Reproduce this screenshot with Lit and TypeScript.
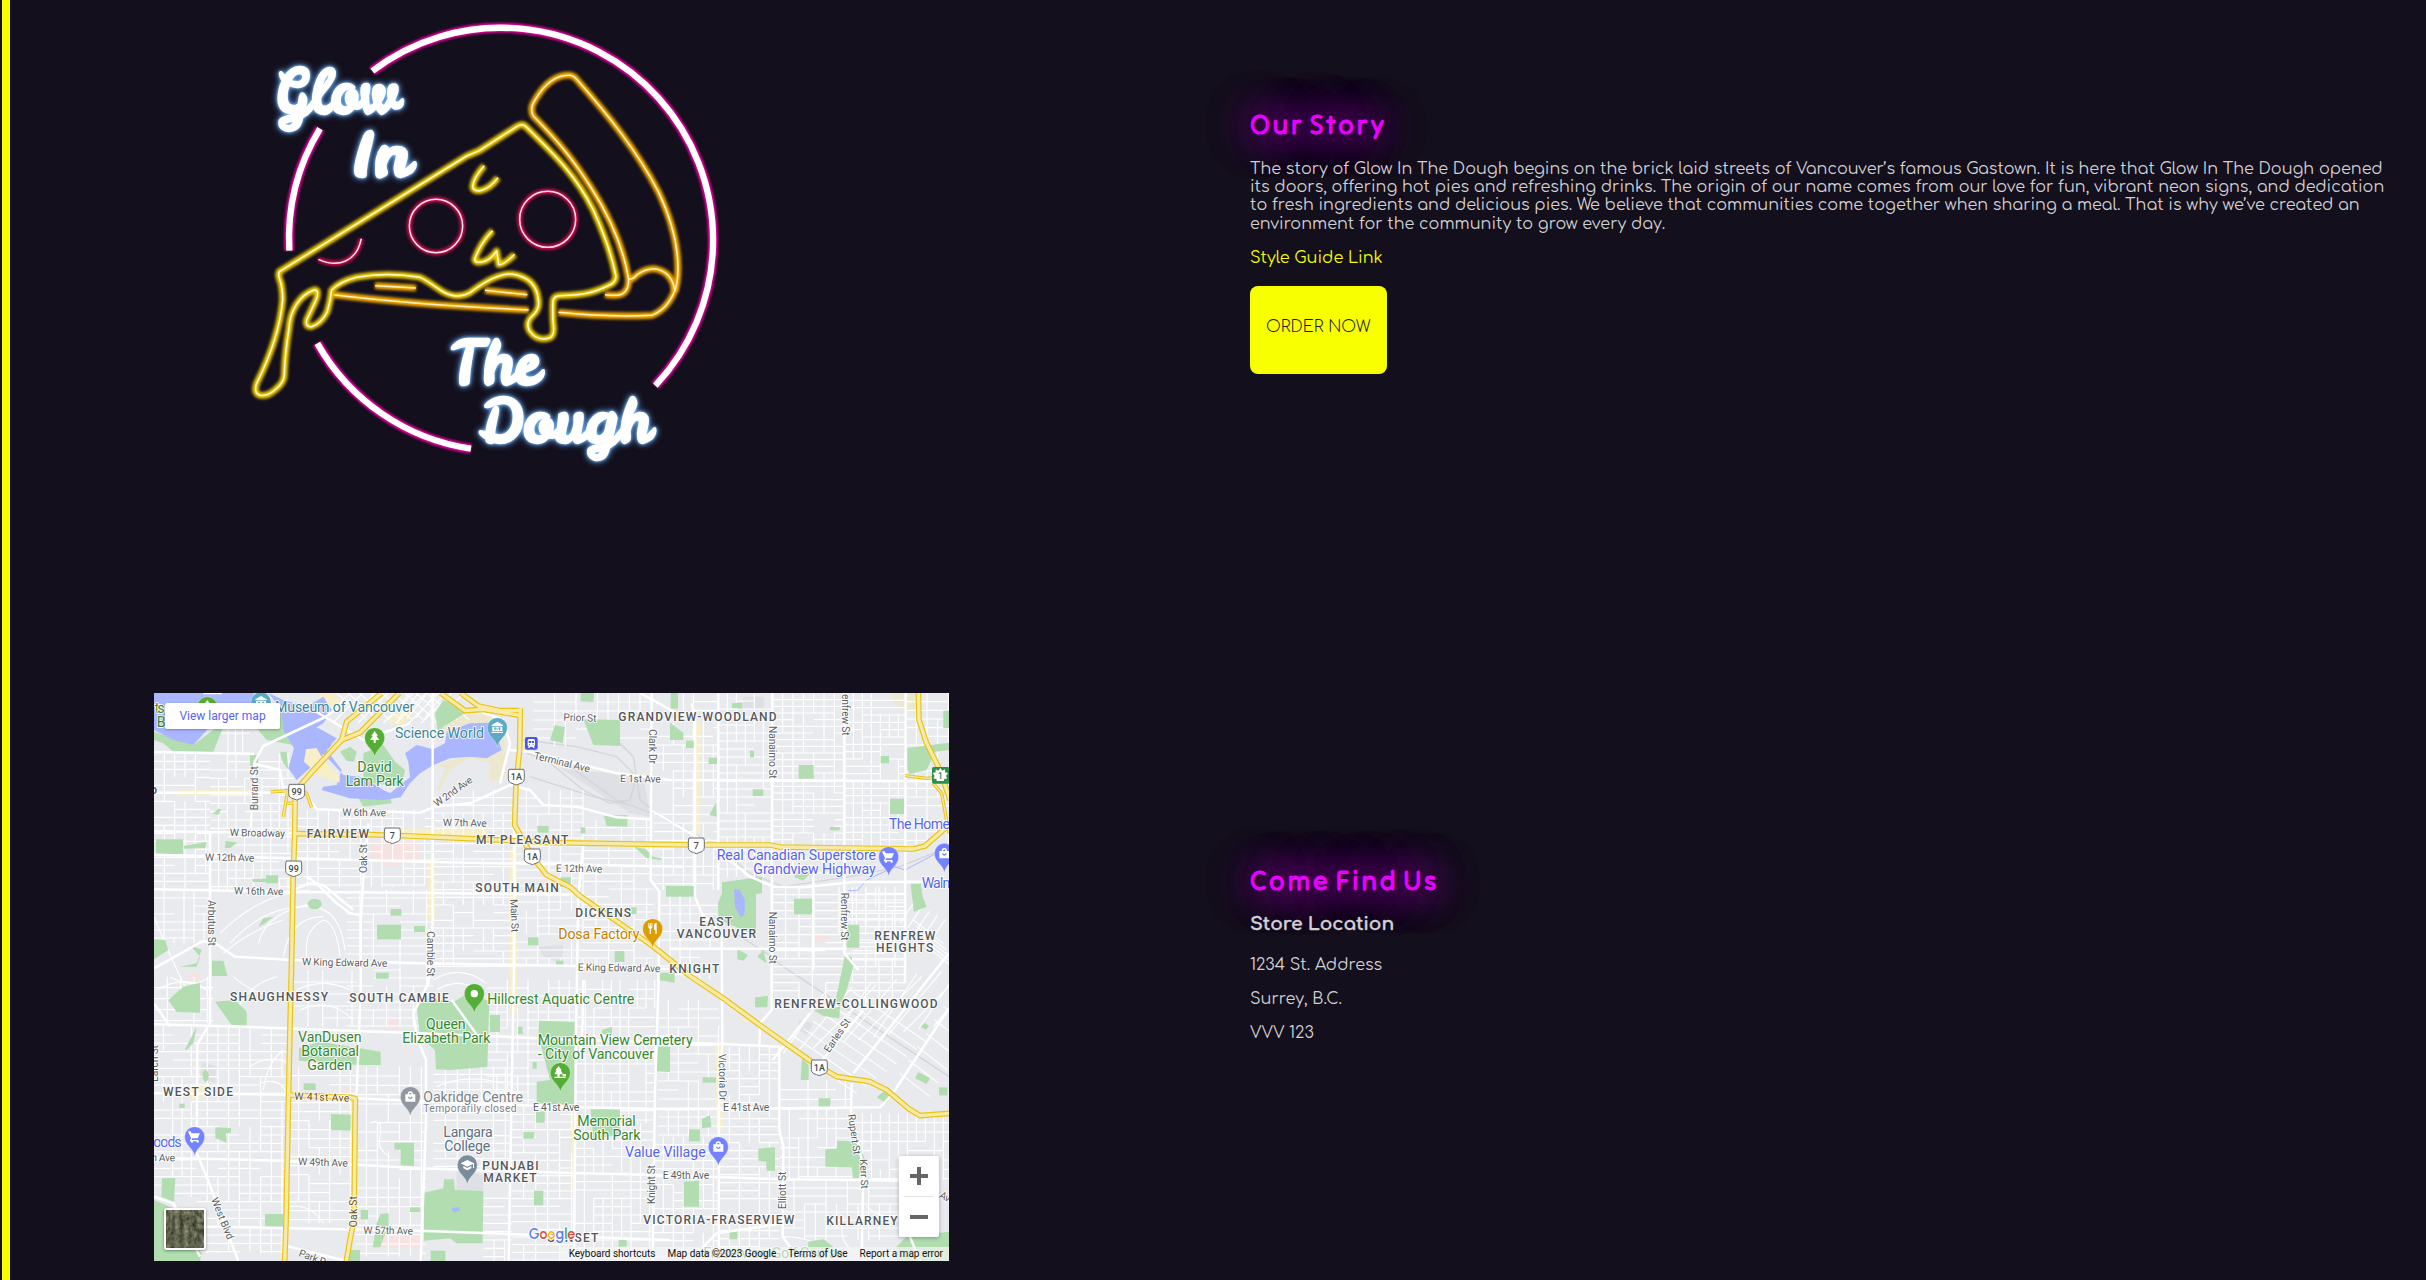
import { LitElement, html, svg, css } from "lit";
import { customElement } from "lit/decorators.js";

/* ---------- map data: three units per pixel ---------- */

type Label = [string, number, number, number, string, number?];

const LABELS: Label[] = [
  ["ts", 14, 68, 30, "poi green"],
  ["B", 20, 110, 22, "poi green"],
  ["Museum of Vancouver", 375, 66, 418, "poi teal"],
  ["Science World", 735, 143, 267, "poi teal"],
  ["David", 622, 246, 103, "poi green"],
  ["Lam Park", 587, 288, 174, "poi green"],
  ["W 6th Ave", 577, 377, 131, "road", 1],
  ["W Broadway", 239, 438, 166, "road", 1],
  ["W 12th Ave", 165, 512, 148, "road", 1],
  ["W 16th Ave", 252, 613, 148, "road", 1],
  ["W King Edward Ave", 456, 826, 256, "road", 1],
  ["FAIRVIEW", 470, 444, 187, "area"],
  ["o", 1, 312, 18, "area"],
  ["Burrard St", 325, 361, 133, "road", -90],
  ["Oak St", 652, 549, 87, "road", -90],
  ["Arbutus St", 174, 630, 138, "road", 90],
  ["Prior St", 1240, 92, 99, "road", 2],
  ["GRANDVIEW-WOODLAND", 1405, 94, 475, "area"],
  ["Clark Dr", 1497, 118, 104, "road", 90],
  ["Terminal Ave", 1150, 206, 172, "road", 14],
  ["E 1st Ave", 1410, 276, 122, "road", 1],
  ["W 2nd Ave", 860, 352, 134, "road", -35],
  ["W 7th Ave", 878, 408, 132, "road", 1],
  ["MT PLEASANT", 978, 463, 277, "area"],
  ["E 12th Ave", 1217, 545, 140, "road", 1],
  ["SOUTH MAIN", 976, 607, 250, "area"],
  ["DICKENS", 1276, 682, 167, "area"],
  ["Dosa Factory", 1225, 747, 243, "poi orange"],
  ["E King Edward Ave", 1283, 842, 248, "road", 1],
  ["Main St", 1081, 628, 99, "road", 88],
  ["Cambie St", 831, 724, 136, "road", 90],
  ["Nanaimo St", 1858, 108, 158, "road", 90],
  ["Nanaimo St", 1858, 665, 157, "road", 90],
  ["enfrew St", 2077, 12, 125, "road", 90],
  ["Renfrew St", 2073, 608, 144, "road", 90],
  ["The Home", 2217, 417, 183, "poi blue"],
  ["Real Canadian Superstore", 1700, 510, 478, "poi blue"],
  ["Grandview Highway", 1810, 552, 367, "poi blue"],
  ["Waln", 2315, 593, 86, "poi blue"],
  ["EAST", 1648, 708, 98, "area"],
  ["VANCOUVER", 1580, 745, 238, "area"],
  ["RENFREW", 2173, 750, 183, "area"],
  ["HEIGHTS", 2178, 786, 172, "area"],
  ["KNIGHT", 1558, 849, 150, "area"],
  ["SHAUGHNESSY", 240, 934, 294, "area"],
  ["SOUTH CAMBIE", 598, 937, 298, "area"],
  ["VanDusen", 444, 1056, 191, "poi green"],
  ["Botanical", 454, 1098, 173, "poi green"],
  ["Garden", 472, 1140, 134, "poi green"],
  ["WEST SIDE", 39, 1218, 210, "area"],
  ["W 41st Ave", 433, 1229, 165, "road brown", 2],
  ["oods", 10, 1370, 85, "poi blue"],
  ["n Ave", 4, 1413, 71, "road", 1],
  ["W 49th Ave", 444, 1425, 149, "road", 2],
  ["West Blvd", 183, 1528, 132, "road", 68],
  ["W 57th Ave", 640, 1631, 149, "road", 1],
  ["Oak St", 620, 1612, 94, "road brown", -90],
  ["Park R", 444, 1698, 84, "road", 20],
  ["Larch St", 25, 1175, 110, "road", -90],
  ["Hillcrest Aquatic Centre", 1012, 941, 441, "poi green"],
  ["Queen", 828, 1017, 119, "poi green"],
  ["Elizabeth Park", 757, 1059, 264, "poi green"],
  ["Mountain View Cemetery", 1163, 1065, 465, "poi green"],
  ["- City of Vancouver", 1163, 1107, 349, "poi green"],
  ["Oakridge Centre", 820, 1236, 299, "poi gray"],
  ["Temporarily closed", 820, 1266, 280, "road gray"],
  ["E 41st Ave", 1149, 1262, 139, "road"],
  ["Memorial", 1282, 1308, 175, "poi green"],
  ["South Park", 1270, 1350, 201, "poi green"],
  ["Langara", 880, 1341, 148, "poi slate"],
  ["College", 883, 1383, 138, "poi slate"],
  ["PUNJABI", 997, 1440, 169, "area"],
  ["MARKET", 1000, 1476, 160, "area"],
  ["Value Village", 1425, 1401, 242, "poi blue"],
  ["Knight St", 1515, 1542, 117, "road", -90],
  ["E 49th Ave", 1538, 1468, 140, "road"],
  ["VICTORIA-FRASERVIEW", 1480, 1602, 453, "area"],
  ["SUNSET", 1192, 1656, 153, "area"],
  ["RENFREW-COLLINGWOOD", 1873, 954, 490, "area"],
  ["Earles St", 2038, 1090, 115, "road", -56],
  ["Victoria Dr", 1706, 1092, 140, "road", 89],
  ["E 41st Ave", 1719, 1263, 139, "road"],
  ["Rupert St", 2094, 1274, 122, "road", 82],
  ["Kerr St", 2130, 1408, 89, "road", 88],
  ["Elliott St", 1909, 1557, 112, "road", -90],
  ["KILLARNEY", 2029, 1606, 214, "area"],
  ["Av", 2366, 1522, 32, "road", 28],
  ["Fraserview Golf Course", 1660, 1704, 420, "poi green"],
];

const WATER = [
  "12,9 312,9 300,60 190,70 180,110 130,165 70,150 12,120",
  "355,9 400,30 470,50 520,20 545,60 520,100 500,112 515,140 545,165 500,215 440,270 415,235 432,175 400,120 395,60",
  "500,112 560,145 520,190 580,255 640,262 700,300 720,310 780,262 775,215 765,190 800,165 850,178 885,160 890,125 960,100 1020,98 1045,150 1055,180 1010,205 960,200 900,205 850,225 810,250 780,280 752,322 700,330 600,325 515,300 520,290 560,285 575,240 530,180",
  "1752,598 1768,598 1785,630 1783,675 1772,682 1755,650",
  "905,1555 925,1550 930,1560 912,1568",
];

const PARKS = [
  "12,125 130,165 190,120 190,70 220,9 240,60 190,185 70,185 40,160 12,150",
  "300,90 350,150 430,165 440,120 400,60 300,60",
  "570,185 600,170 620,185 612,215 590,212", "640,190 700,165 735,215 765,240 755,290 640,275",
  "620,315 720,308 725,340 640,350", "390,185 410,185 415,240 398,215", "300,195 325,195 325,228 300,228",
  "18,448 99,448 99,492 18,492", "102,468 170,455 166,474 102,476", "227,453 262,458 240,474 225,474",
  "348,556 384,556 384,580 348,580", "308,566 348,566 348,576 308,576", "722,657 754,657 754,677 722,677",
  "681,704 753,704 753,748 681,748", "12,748 45,750 55,780 12,808", "90,830 140,820 155,780 120,765 150,800 140,830",
  "325,710 340,685 370,680 345,700", "186,812 220,812 232,858 186,858", "678,848 716,848 716,866 678,866",
  "187,372 205,356 214,358 205,374",
  "855,70 880,30 930,50 945,70 880,110 865,130", "1200,150 1215,105 1245,112 1238,160",
  "1300,88 1410,90 1410,168 1330,165", "1292,9 1332,9 1330,36 1292,34", "1562,9 1584,9 1584,56 1562,56",
  "1560,98 1600,128 1600,150 1560,150", "1362,378 1432,375 1432,410 1370,408", "1162,408 1196,408 1196,428 1162,428",
  "1292,412 1306,412 1306,430 1292,430", "1452,470 1488,478 1510,500 1534,504 1534,510 1490,505", "1548,588 1632,588 1632,620 1548,620",
  "1232,562 1264,562 1260,592 1230,590", "1134,742 1165,742 1165,766 1134,766", "792,708 825,708 825,726 792,726",
  "1442,652 1460,652 1460,672 1442,672", "1394,783 1423,783 1423,816 1394,816", "1218,812 1240,812 1240,826 1218,826",
  "1746,40 1777,38 1777,56 1746,54", "1608,152 1638,152 1638,174 1608,174", "1676,203 1704,203 1704,222 1676,222",
  "1800,182 1812,182 1812,202 1800,202", "1946,225 1991,225 1991,266 1946,266", "2192,198 2217,198 2217,220 2192,220",
  "2272,174 2397,158 2397,180 2355,185 2330,240 2280,252 2272,240", "2380,62 2397,62 2397,114 2380,114",
  "1808,298 1840,298 1840,318 1808,318", "1678,375 1698,338 1700,380", "2220,326 2264,326 2264,372 2220,372",
  "2040,411 2069,411 2069,421 2040,421", "1716,577 1836,560 1836,610 1818,612 1818,735 1760,712 1706,690 1704,640 1716,610", "1932,626 1990,626 1990,673 1932,673",
  "1932,560 1960,530 1985,545 1960,572", "2282,582 2312,582 2318,620 2330,650 2292,665 2286,620", "2090,704 2128,704 2128,773 2090,773",
  "2085,795 2105,800 2110,830 2090,900 2070,950 2055,940", "1762,778 1794,795 1780,812 1762,808", "1822,800 1840,780 1850,820",
  "1528,848 1574,848 1574,878 1528,870",
  "55,930 100,890 150,878 150,968 80,966", "195,935 255,930 290,965 290,1005 245,1005", "105,1078 140,1010 130,1060 110,1080",
  "447,1075 510,1055 692,1085 692,1125 624,1125 447,1112", "461,1180 497,1180 497,1200 461,1200", "543,1272 602,1274 602,1322 543,1320",
  "196,1312 243,1314 243,1328 228,1330 230,1358 196,1344", "88,1241 104,1241 104,1254 88,1254", "36,1465 76,1464 72,1535 34,1520",
  "12,1530 70,1555 110,1640 155,1690 150,1713 12,1713", "345,1572 400,1572 400,1610 345,1610", "733,1358 791,1358 791,1428 752,1426 752,1380 733,1378",
  "632,1560 654,1560 654,1588 632,1588", "692,1572 716,1570 716,1605 690,1672 668,1672 680,1600", "595,1680 630,1680 630,1713 595,1713", "780,1552 810,1552 810,1566 780,1566",
  "800,950 830,925 912,935 960,905 1018,935 1012,1130 900,1140 858,1138 855,1080 810,1040", "1020,975 1050,975 1050,1026 1020,1026",
  "1104,1010 1118,1010 1118,1032 1104,1032", "1166,992 1274,996 1274,1245 1160,1240 1160,1175 1200,1170 1166,1040", "1356,1020 1386,1010 1386,1035 1356,1032",
  "1524,1070 1560,1070 1560,1146 1516,1144", "1148,1116 1160,1116 1160,1136 1148,1136", "1322,1258 1410,1258 1410,1332 1330,1350",
  "1158,1265 1184,1265 1184,1298 1158,1298", "1120,1326 1152,1326 1152,1346 1120,1346", "1152,1502 1180,1502 1180,1546 1152,1546",
  "822,1508 880,1495 882,1468 912,1468 914,1500 1000,1502 998,1660 920,1660 900,1645 822,1652", "842,1682 886,1682 886,1713 842,1713", "1406,1650 1430,1650 1430,1670 1406,1670",
  "780,1358 792,1360 792,1426 780,1426",
  "1815,922 1854,918 1852,952 1815,952", "1990,960 2070,950 2068,985 2020,978", "1956,1105 1976,1125 1976,1170 1952,1170",
  "2006,1225 2042,1225 2040,1250 2006,1250", "2180,1222 2200,1205 2225,1220 2208,1240", "2295,1165 2305,1147 2340,1165 2330,1182",
  "2312,1010 2325,998 2337,1008 2327,1020", "2367,1192 2392,1192 2392,1216 2367,1216", "1658,1162 1698,1162 1698,1178 1658,1178",
  "1656,1286 1680,1276 1684,1312 1656,1314", "1617,1318 1650,1318 1650,1354 1617,1354", "1825,1376 1875,1372 1875,1442 1850,1442 1848,1415 1825,1412",
  "2026,1378 2060,1376 2062,1352 2124,1355 2145,1410 2125,1465 2110,1464 2105,1432 2026,1430", "1601,1475 1647,1472 1647,1550 1601,1550",
  "1738,1624 1762,1624 1762,1648 1738,1648", "1975,1655 2020,1648 2050,1670 2005,1690 1975,1675", "2240,1670 2270,1640 2397,1625 2397,1713 2240,1713",
];

const TINT = [
  "82,300 300,300 300,318 82,318", "465,180 500,175 520,210 568,258 568,278 500,255 465,215",
  "715,90 760,50 790,70 750,115", "500,10 560,10 580,60 550,60", "1628,90 1652,100 1650,430 1630,430",
  "1262,1260 1280,1260 1275,1500 1262,1500", "1078,480 1100,480 1102,970 1080,970", "835,500 855,500 855,690 835,690", "700,415 1010,420 1010,445 700,440",
  "117,1190 180,1182 180,1220 117,1230", "1695,1060 1720,1060 1720,1320 1700,1320", "1770,990 1795,980 1800,1000",
];
const SAND = ["865,130 900,80 960,72 1060,80 1068,250 1055,272 1020,272 1020,220 960,205 900,240 870,300 860,300 885,235 850,225 960,195 1040,170 960,110", "2225,9 2295,9 2295,70 2230,40"];
const PINK = [
  "662,455 802,452 810,512 720,530 662,505", "118,850 150,845 145,875 120,870", "1170,540 1200,545 1195,590 1172,580", "1992,730 2030,730 2030,752 1992,752",
  "582,1190 612,1190 612,1212 582,1212", "692,1640 810,1635 810,1672 692,1675", "708,988 745,990 745,1020 728,1020",
];
const SHADE = ["155,1115 200,1130 195,1180 150,1165", "1165,770 1240,765 1235,820 1180,800", "920,1440 1000,1455 1000,1500 920,1500", "1945,990 1990,1000 1970,1035 1945,1020", "1230,235 1480,260 1500,380 1440,370", "1780,20 1842,20 1842,56 1780,56"];

const ARTERIAL = [
  "12,186 312,192", "302,415 314,215 340,168 520,84 600,30", "12,308 415,308", "12,424 432,430", "12,494 810,515 1600,530", "12,598 432,606 810,608 1260,615",
  "12,835 155,755 185,752 255,800 430,810 810,820 1290,828 1560,838", "12,1003 300,1011 810,1030 1290,1050 1720,1062 1890,1070", "12,1210 420,1214", "616,1225 810,1234 1290,1252 1560,1258 2190,1252 2225,1215 2397,955",
  "12,1403 400,1412 810,1435 1290,1450 1560,1456 1900,1468 2300,1472", "170,1610 810,1622 1290,1640 1560,1650", "180,424 180,1000 142,1062 140,1390 170,1460 265,1713",
  "655,400 640,560 632,700 632,900 620,1210", "848,9 848,700 835,880 790,970 800,1040 828,1110 828,1300 812,1713", "1095,400 1092,840 1085,1200 1076,1713", "1300,465 1285,620 1278,1040 1272,1713",
  "1505,9 1502,570 1528,605 1525,900 1515,1200 1508,1713", "1625,40 1635,80 1635,620 1655,670 1715,730 1717,1060 1707,1250 1706,1713", "1705,9 1705,600", "1867,9 1865,960 1830,1000 1828,1065",
  "2083,9 2083,790 2125,840", "2267,9 2265,880", "1080,180 1140,185 1400,250 1560,270 2397,274", "1502,360 1690,470 1800,560 1870,590 1960,592 2110,576 2397,575",
  "848,350 960,340 1080,285 1140,300 1180,345 1280,350 1400,382 1502,388", "1888,1070 1888,1320 1900,1370 1898,1640 1950,1713", "1560,776 2090,776", "1990,560 1990,840",
  "1300,870 1298,1000 1290,1100", "2105,1180 2103,1270 2140,1430 2135,1713", "1868,1110 1980,970", "2010,1120 2140,960", "2110,1150 2397,790", "1690,1065 1610,1062", "470,560 500,580 560,640 600,670 632,676",
  "432,600 475,580 520,585 610,660", "160,9 215,9", "490,60 640,150 780,100", "310,220 390,240 400,300", "1470,9 1580,70", "12,1520 70,1540 150,1700", "410,1668 590,1713", "1640,1690 1700,1630 1900,1600", "905,930 985,1040", "980,60 1060,90 1080,160 1060,240 1050,280", "480,330 500,358 810,368 850,352",
  "12,940 60,1010", "2280,1640 2310,1713",
];

const CURVES = [
  "M210,730 Q330,610 480,600", "M240,760 Q350,640 490,650 Q570,660 585,780", "M325,760 Q350,660 500,640", "M400,800 Q420,680 520,680", "M470,800 Q460,720 520,690 Q560,700 570,800", "M220,790 Q300,720 400,690",
  "M12,680 Q60,800 110,900", "M60,860 Q130,900 180,860", "M20,900 Q110,850 170,900", "M250,860 Q330,930 420,920", "M260,960 Q300,880 380,860", "M440,900 Q520,860 600,900", "M450,960 Q540,920 610,990", "M330,1180 Q390,1160 410,1210", "M300,1130 Q360,1090 410,1120", "M340,1200 Q350,1120 400,1080",
  "M860,900 Q920,860 990,900", "M850,870 Q930,820 1010,880", "M660,1300 Q700,1280 690,1340 Q680,1380 720,1400", "M860,1190 Q940,1150 1060,1180", "M420,1550 Q480,1540 520,1600", "M2150,1550 Q2200,1600 2280,1560", "M1900,1640 Q2000,1640 2080,1713", "M2080,1580 Q2060,1660 2120,1690",
];

const RAIL = ["1120,150 1280,170 1400,200 1460,260 1440,330 1380,340 1300,300 1140,170", "1130,190 1260,230 1400,330 1560,390 1700,470 1800,550 1900,590 2100,560 2250,530 2397,470", "1400,150 1450,200 1470,330 1560,400", "1740,720 1850,790 1900,830 2397,1160", "1140,260 1330,320 1440,345"];

const HWY = [
  "448,290 480,252 575,150 590,95 695,9", "575,150 630,128 748,9", "872,9 945,62 1000,58 1110,76", "932,9 985,48 1050,62 1110,62",
  "1111,55 1109,180 1098,280 1094,405 1150,505 1190,555 1262,592 1290,618 1508,768 1620,858 1720,925 1840,1013 1980,1112 2060,1160 2160,1175 2210,1200 2275,1255 2310,1277 2400,1270",
  "436,300 434,440 430,540 424,850 420,1010 415,1250 408,1600 404,1720", "434,431 660,434 780,438 1010,448 1200,458 1640,465 1860,465 1890,471 2290,477 2325,468 2397,405",
  "2305,9 2307,90 2330,160 2370,240 2400,330", "418,1215 600,1222 616,1226 612,1590 600,1650 588,1720",
];
const HWY_THIN = ["362,306 440,300", "412,310 400,380", "412,340 440,338", "440,300 470,310 485,352", "2265,257 2330,265 2380,260", "2350,280 2375,310 2397,430"];

/* deterministic noise, so that streets break off in the same places on every render */
const noise = (a: number, b: number) => {
  const v = Math.sin(a * 12.9898 + b * 78.233) * 43758.5453;
  return v - Math.floor(v);
};

/* [x0, y0, x1, y1, column pitch, row pitch] */
const BLOCKS = [
  [12, 190, 180, 600, 31, 24], [180, 190, 430, 600, 26, 25], [440, 360, 850, 590, 32, 25], [12, 600, 180, 760, 30, 24], [190, 9, 300, 190, 22, 60],
  [590, 600, 850, 1010, 40, 24], [850, 300, 1095, 830, 30, 23], [1095, 300, 1300, 830, 34, 24], [1300, 390, 1510, 840, 38, 23], [1150, 9, 1500, 170, 32, 27],
  [1510, 9, 1705, 600, 30, 26], [1705, 9, 1867, 560, 27, 24], [1867, 9, 2083, 560, 31, 20], [2083, 9, 2267, 470, 27, 22], [2267, 9, 2397, 470, 32, 26],
  [1867, 590, 2265, 960, 40, 24], [1530, 620, 1705, 870, 30, 26], [2090, 590, 2265, 830, 29, 20], [12, 1010, 140, 1520, 28, 25], [140, 1010, 415, 1690, 32, 25],
  [415, 1130, 616, 1600, 31, 27], [616, 1130, 828, 1700, 33, 28], [850, 1130, 1085, 1440, 36, 23], [1010, 870, 1280, 1250, 31, 24], [1085, 1250, 1275, 1713, 36, 23],
  [1280, 870, 1515, 1300, 26, 28], [1275, 1300, 1510, 1713, 28, 25], [1525, 930, 1710, 1340, 30, 27], [1510, 1340, 1705, 1713, 30, 24], [1708, 1070, 1888, 1713, 30, 24],
  [1890, 1170, 2105, 1470, 28, 29], [1900, 1470, 2250, 1650, 32, 24], [2110, 1270, 2397, 1470, 27, 28], [1000, 1500, 1085, 1713, 32, 25], [12, 860, 190, 1000, 40, 33], [430, 840, 620, 1010, 44, 36],
];

function grid([x0, y0, x1, y1, dx, dy]: number[]) {
  let d = "";
  for (let x = x0 + dx; x < x1; x += dx)
    for (let y = y0; y < y1; y += dy * 3) if (noise(x, y) > 0.3) d += `M${x} ${y}V${Math.min(y1, y + dy * 3)}`;
  for (let y = y0 + dy; y < y1; y += dy)
    for (let x = x0; x < x1; x += dx * 2) if (noise(y, x + 7) > 0.18) d += `M${x} ${y}H${Math.min(x1, x + dx * 2)}`;
  return d;
}
const STREETS = BLOCKS.map(grid).join("");

let slant = "";
for (let i = 0; i < 11; i++) slant += `M${1900 + i * 45} ${1090 - i * 8}l${130 + (i % 3) * 30} ${-190}`;
for (let i = 0; i < 8; i++) slant += `M${1900 + i * 30} ${1060 - i * 22}l${220} ${150}`;
for (let i = 0; i < 8; i++) slant += `M${2250 + i * 26} ${1150 - i * 40}l${90} ${70}`;
let downtown = "";
for (let i = 0; i < 10; i++) downtown += `M${560 + i * 34} 9l90 80M${600 + i * 38} 9l-90 90`;
for (let i = 0; i < 5; i++) downtown += `M${780 + i * 26} 9l-60 75M${2290 + i * 24} ${640 + i * 12}l-40 60M${2290 + i * 10} ${690 + i * 20}l90 70`;

const tree = svg`<path d="M0-20l10 14h-5l9 13H3v9h-6V7h-11l9-13h-5z" />`;
const cart = svg`<path d="M-19-16h7l3 6h25l-7 15H-7l-3 5h21v4h-26l4-10-7-16h-1z" /><circle cx="-8" cy="15" r="3.4" /><circle cx="9" cy="15" r="3.4" />`;
const bag = svg`<path fill-rule="evenodd" d="M-15-7h7a8 9 0 0 1 16 0h7v22h-30zM-4-7h8a4 5 0 0 0-8 0zM-7 0a7 7 0 0 0 14 0h-4a3 3 0 0 1-6 0z" />`;
const museum = svg`<path fill-rule="evenodd" d="M-17-8L0-18 17-8v3h-34zM-15-3h30v13h-30zM-17 12h34v4h-34zM-9 8h4V2l5 5 5-5v6h4v-9H6L0 4l-6-5h-3z" />`;
const food = svg`<path d="M-13-17h2.500v10h2v-10h3v10h2v-10h2.500v13q0 4-4 5v15h-4v-15q-4-1-4-5zM4-10q0-7 8-8v34H8V3H4z" />`;
const cap = svg`<path d="M0-15l20 10v14h-3V-3L0 5l-20-10zM-12 3L0 9 12 3v7L0 16l-12-6z" />`;
const dot = svg`<circle r="11" />`;
const park = svg`<path d="M-5-20l9 13H1l7 12h-10v7h-7V5h-9l7-12h-4zM-18 12h34v4h-34zM7 4h10v7H7z" />`;

const PINS: [number, number, string, unknown][] = [
  [172, 50, "#54ad35", tree], [333, 36, "#5cabc3", museum], [674, 143, "#54ad35", tree], [1042, 113, "#5cabc3", museum], [1508, 716, "#dd9c00", food],
  [2216, 500, "#7482ff", cart], [2383, 490, "#7482ff", bag], [134, 1340, "#7482ff", cart], [781, 1220, "#92969e", bag], [973, 911, "#54ad35", dot],
  [1231, 1148, "#54ad35", park], [952, 1425, "#7a8b9b", cap], [1705, 1370, "#7482ff", bag],
];
const SHIELDS: [string, number, number][] = [["99", 440, 306], ["99", 431, 536], ["7", 727, 437], ["1A", 1099, 261], ["1A", 1147, 500], ["7", 1639, 467], ["1A", 2008, 1133]];

const polys = (list: string[], cls: string) => list.map((p) => svg`<polygon class=${cls} points=${p} />`);
const lines = (list: string[], cls: string) => list.map((p) => svg`<polyline class=${cls} points=${p} />`);

@customElement("city-map")
class CityMap extends LitElement {
  static styles = css`
    :host { display: block; width: 795px; height: 568px; position: relative; overflow: hidden; font-family: Roboto, "Liberation Sans", sans-serif; background: #e8eaed; }
    .canvas { display: block; width: 100%; height: 100%; }
    .water { fill: #aab7ff; }
    .park { fill: #b1ddb0; }
    .tint { fill: #f6efc9; }
    .sand { fill: #ece8d0; }
    .pink { fill: #f6e3e1; }
    .shade { fill: #dfdfe6; }
    .street, .arterial, .rail, .edge, .core { fill: none; stroke-linejoin: round; }
    .street { stroke: #fff; stroke-width: 3.3; }
    .arterial { stroke: #fff; stroke-width: 7.500; }
    .rail { stroke: #d3d5da; stroke-width: 4; }
    .edge { stroke: #e8c412; stroke-width: 17; }
    .core { stroke: #f8eaa6; stroke-width: 10; }
    .edge.thin { stroke-width: 10; }
    .core.thin { stroke-width: 4; }
    .label { paint-order: stroke; stroke: #fff; stroke-width: 6px; stroke-linejoin: round; stroke-opacity: .85; }
    .poi { font-size: 42.500px; }
    .road { font-size: 31px; fill: #5c5f64; }
    .area { font-size: 36px; font-weight: 500; fill: #54575b; }
    .green { fill: #35872f; }
    .teal { fill: #3c8799; }
    .orange { fill: #c47d00; }
    .blue { fill: #5464f2; }
    .gray { fill: #7d8186; }
    .slate { fill: #5c7182; }
    .brown { fill: #6d4c08; }
    .glyph { fill: #fff; }
    .shield { fill: #fff; stroke: #6a6d72; stroke-width: 3; }
    .shield-text { font-size: 27px; font-weight: 500; fill: #45484c; text-anchor: middle; }
    .leaf-text { fill: #2f8f4c; }
    .google { font-size: 46px; paint-order: stroke; stroke: #fff; stroke-width: 5px; font-family: "Product Sans", Urbanist, "Open Sans", sans-serif; font-weight: 600; }
    .g-blue { fill: #5d7cf5; } .g-red { fill: #e04a3c; } .g-yellow { fill: #f2bc09; } .g-green { fill: #35a552; }
    .larger { position: absolute; left: 11px; top: 10px; width: 115px; height: 26px; border-radius: 2px; background: #fff; box-shadow: 0 1px 3px rgba(0,0,0,.3); color: #5b62f5; font-size: 12px; line-height: 26px; text-align: center; }
    .thumb { position: absolute; left: 10px; bottom: 11px; box-sizing: border-box; width: 42px; height: 42px; border: 2px solid #fff; border-radius: 3px; box-shadow: 0 1px 3px rgba(0,0,0,.4); overflow: hidden; }
    .thumb svg { display: block; width: 38px; height: 38px; }
    .zoom { position: absolute; right: 10px; bottom: 24px; width: 40px; height: 81px; border-radius: 2px; background: #fff; box-shadow: 0 1px 4px rgba(0,0,0,.3); display: flex; flex-direction: column; align-items: center; }
    .zoom svg { width: 40px; height: 40px; display: block; fill: #666; }
    .rule { width: 30px; height: 1px; background: #e6e6e6; }
    .legal { position: absolute; right: 0; bottom: 0; height: 14px; padding: 0 6px 0 10px; background: rgba(245,245,245,.7); display: flex; gap: 12px; font-size: 10px; line-height: 14px; color: #111; white-space: nowrap; }
  `;

  render() {
    return html`
      <svg class="canvas" viewBox="12 9 2385 1704" preserveAspectRatio="none">
        <rect x="12" y="9" width="2385" height="1704" fill="#e8eaed" />
        ${polys(SHADE, "shade")}${polys(SAND, "sand")}${polys(TINT, "tint")}${polys(PINK, "pink")}
        <path class="street" d=${downtown} />
        ${lines(RAIL, "rail")}
        <path class="street" d=${STREETS} /><path class="street" d=${slant} />
        ${CURVES.map((d) => svg`<path class="street" d=${d} />`)}
        ${polys(PARKS, "park")}
        <ellipse class="park" cx="494" cy="642" rx="21" ry="16" /><ellipse class="park" cx="167" cy="1157" rx="9" ry="18" />
        ${polys(WATER, "water")}
        <polygon class="tint" points="468,178 500,174 520,210 570,262 568,278 500,250 462,215" />
        <polyline points="2095,602 2122,602 2150,570 2235,530 2265,540 2340,500 2397,470" fill="none" stroke="#aab7ff" stroke-width="3" />
        ${lines(ARTERIAL, "arterial")}
        ${lines(HWY, "edge")}${lines(HWY_THIN, "edge thin")}${lines(HWY, "core")}${lines(HWY_THIN, "core thin")}
        ${SHIELDS.map(([t, x, y]) => svg`<g transform="translate(${x} ${y})"><path class="shield" d="M-22-23h44q2 6 2 12v16q0 8-6 12-10 4-18 7-8-3-18-7-6-4-6-12v-16q0-6 2-12z" /><text class="shield-text" y="10">${t}</text></g>`)}
        <g transform="translate(2371 256)"><rect x="-25" y="-25" width="52" height="50" rx="5" fill="#2f8f4c" /><path d="M0-22l6 8 8-4v9l9 2-6 9 4 7-10 3v5H-11v-5l-10-3 4-7-6-9 9-2v-9l8 4z" fill="#fff" /><text class="shield-text leaf-text" y="11">1</text></g>
        ${PINS.map(([x, y, c, g]) => svg`<g transform="translate(${x} ${y})"><path d="M0 58C-5 32-30 26-30 0a30 30 0 0 1 60 0C30 26 5 32 0 58z" fill=${c} stroke="#fff" stroke-opacity=".5" stroke-width="2" /><g class="glyph">${g}</g></g>`)}
        <g transform="translate(1144 160)"><rect x="-19" y="-19" width="38" height="38" rx="6" fill="#4a55e8" /><path class="glyph" fill-rule="evenodd" d="M-11-8q0-5 5-5H6q5 0 5 5V6q0 4-4 4l4 4H6L3 10h-6l-3 4h-5l4-4q-4 0-4-4zM-8-7v6h7v-6zM1-7v6h7v-6zM-7 3v3h3V3zM4 3v3h3V3z" /></g>
        ${LABELS.map(([t, x, y, w, cls, r = 0]) => svg`<text class="label ${cls}" transform="translate(${x} ${y}) rotate(${r})" textLength=${w}>${t}</text>`)}
        <text class="google" x="1136" y="1647" textLength="140" lengthAdjust="spacingAndGlyphs"><tspan class="g-blue">G</tspan><tspan class="g-red">o</tspan><tspan class="g-yellow">o</tspan><tspan class="g-blue">g</tspan><tspan class="g-green">l</tspan><tspan class="g-red">e</tspan></text>
      </svg>
      <div class="larger">View larger map</div>
      <div class="thumb">
        <svg viewBox="0 0 38 38">
          <defs><filter id="ground" x="0" y="0" width="1" height="1" color-interpolation-filters="sRGB"><feTurbulence type="fractalNoise" baseFrequency=".22 .16" numOctaves="4" seed="6" /><feColorMatrix values=".5 .2 0 0 .02  .5 .2 0 0 .03  .45 .15 0 0 0  0 0 0 0 1" /></filter></defs>
          <rect width="38" height="38" filter="url(#ground)" />
        </svg>
      </div>
      <div class="zoom">
        <svg viewBox="0 0 40 40"><path d="M18 11h4v7h7v4h-7v7h-4v-7h-7v-4h7z" /></svg>
        <div class="rule"></div>
        <svg viewBox="0 0 40 40"><path d="M11 18h18v4h-18z" /></svg>
      </div>
      <div class="legal"><span>Keyboard shortcuts</span><span>Map data ©2023 Google</span><span>Terms of Use</span><span>Report a map error</span></div>
    `;
  }
}

/* ---------- neon sign ---------- */

const CHEESE = [
  "M118 815L680 468Q700 460 718 452L830 380Q848 368 860 382C950 470 1010 530 1060 630Q1110 740 1127 825Q1130 842 1115 852C1070 875 1040 885 960 887Q940 888 939 905Q937 950 941 985Q942 1012 925 1015Q890 1024 868 992Q855 965 880 945Q900 925 895 900C892 860 870 830 815 822C770 820 720 855 690 878Q650 900 605 873C570 850 560 840 540 832Q440 815 350 832Q300 845 275 870Q272 900 262 935Q245 970 215 980Q195 982 200 960L228 900Q240 868 222 870C180 885 150 930 147 985Q135 1060 133 1120Q134 1145 110 1165Q85 1190 60 1186Q40 1180 50 1150C85 1080 120 990 128 900Q128 860 118 835Q114 822 118 815Z",
  "M733 497C712 520 700 540 698 560Q700 574 720 572Q750 566 774 533",
  "M758 692C728 722 712 755 704 778Q705 790 725 786Q748 784 770 753Q774 775 776 794Q790 796 824 763",
];
const CRUST = [
  "M1095 884Q1140 890 1152 878Q1166 868 1166 838C1150 740 1110 650 1050 558C1000 480 960 430 880 348Q868 325 885 300C915 250 950 222 992 226Q1002 228 1010 238C1100 340 1190 450 1255 575C1300 670 1318 760 1313 830C1310 880 1280 930 1235 946Q1100 952 955 937",
  "M1166 838Q1180 838 1190 825Q1215 806 1245 806C1280 812 1300 835 1305 875",
  "M280 884C450 905 650 920 866 930",
  "M405 857L528 864",
  "M735 871L862 884",
];
const PEPPERONI = ["M668 678a80 80 0 1 1-160 0a80 80 0 1 1 160 0", "M1007 658a84 84 0 1 1-168 0a84 84 0 1 1 168 0", "M235 778C295 805 350 785 364 716"];
const RING = ["M397 213A637 637 0 0 1 1246 1157", "M240 386A637 637 0 0 0 148 752", "M232 1030A637 637 0 0 0 693 1346"];
const WORDS: [string, number, number, number][] = [["Glow", 106, 342, 372], ["In", 332, 530, 178], ["The", 630, 1154, 268], ["Dough", 716, 1330, 516]];

@customElement("neon-sign")
class NeonSign extends LitElement {
  static styles = css`
    :host { display: block; width: 490px; height: 480px; }
    .sign { display: block; width: 100%; height: 100%; overflow: visible; }
    .tube, .halo { fill: none; stroke-linecap: butt; stroke-linejoin: round; }
    .halo { filter: blur(4.500px); }
    .halo.cheese { stroke: #f2cc00; stroke-width: 20; }
    .halo.crust { stroke: #f8ac00; stroke-width: 20; }
    .halo.meat { stroke: #d80f52; stroke-width: 15; }
    .halo.ring { stroke: #e4009a; stroke-width: 30; filter: blur(3px); }
    .tube { stroke-width: 4.500; }
    .tube.cheese { stroke: #fffbd0; }
    .tube.crust { stroke: #fff0c0; }
    .tube.meat { stroke: #ffe3ea; }
    .tube.ring { stroke: #fff; stroke-width: 19; }
    .word { font-family: "Leckerli One", "Oleo Script", Pacifico, cursive; font-size: 186px; fill: #fff; stroke: #fff; stroke-width: 7; stroke-linejoin: round; filter: drop-shadow(0 0 5px #8cc4ff) drop-shadow(0 0 9px #5ca2ea); }
  `;

  render() {
    const group = (list: string[], kind: string) => svg`${list.map((d) => svg`<path class="halo ${kind}" d=${d} />`)}${list.map((d) => svg`<path class="tube ${kind}" d=${d} />`)}`;
    return html`<svg class="sign" viewBox="0 0 1470 1440">
      ${group(RING, "ring")}${group(CRUST, "crust")}${group(CHEESE, "cheese")}${group(PEPPERONI, "meat")}
      ${WORDS.map(([t, x, y, w]) => svg`<text class="word" x=${x} y=${y} textLength=${w} lengthAdjust="spacingAndGlyphs">${t}</text>`)}
    </svg>`;
  }
}

/* ---------- page ---------- */

@customElement("app-root")
class AppRoot extends LitElement {
  static styles = css`
    :host { display: block; background: #130f1c; font-family: Comfortaa, Lato, sans-serif; color: #d3d1d4; }
    .page { box-sizing: border-box; height: 1280px; margin-left: 2px; border-left: 8px solid #f8ff00; overflow: hidden; display: grid; grid-template-columns: 1240px 1fr; grid-template-rows: 693px 587px; }
    .logo { padding-left: 230px; }
    .place { padding-left: 144px; }
    .story { padding-top: 109px; }
    .find { padding-top: 172px; }
    h2 { margin: 0; font-family: "Tilt Neon", Comfortaa, Lato, sans-serif; font-size: 27px; line-height: 30px; font-weight: 700; letter-spacing: 3px; word-spacing: -4px; color: #ea00ff; text-shadow: 0 0 44px rgba(224,0,245,.75), 0 0 44px rgba(224,0,245,.75), 0 0 44px rgba(224,0,245,.5); }
    h3 { margin: 17px 0 0; font-size: 18.720px; line-height: 24px; font-weight: 700; letter-spacing: -.1px; -webkit-text-stroke: .4px currentColor; }
    p { margin: 0; font-size: 16px; line-height: 18.400px; white-space: nowrap; }
    .story p { margin-top: 20.500px; }
    .line { display: block; }
    .guide { display: block; width: max-content; margin-top: 16px; font-size: 16px; line-height: 19px; color: #f8ff00; text-decoration: none; }
    .order { display: flex; align-items: center; justify-content: center; width: 137px; height: 88px; margin-top: 18px; padding: 0 0 6px; box-sizing: border-box; border: 0; border-radius: 8px; background: #f8ff00; color: #1a1820; font: 300 16px Comfortaa, Lato, sans-serif; }
    .find p { line-height: 19px; margin-top: 15px; }
    .find h3 + p { margin-top: 20px; }
  `;

  render() {
    return html`<main class="page">
      <div class="logo"><neon-sign></neon-sign></div>
      <section class="story">
        <h2>Our Story</h2>
        <p>
          <span class="line">The story of Glow In The Dough begins on the brick laid streets of Vancouver’s famous Gastown. It is here that Glow In The Dough opened</span>
          <span class="line">its doors, offering hot pies and refreshing drinks. The origin of our name comes from our love for fun, vibrant neon signs, and dedication</span>
          <span class="line">to fresh ingredients and delicious pies. We believe that communities come together when sharing a meal. That is why we’ve created an</span>
          <span class="line">environment for the community to grow every day.</span>
        </p>
        <a class="guide">Style Guide Link</a>
        <button class="order">ORDER NOW</button>
      </section>
      <div class="place"><city-map></city-map></div>
      <section class="find">
        <h2>Come Find Us</h2>
        <h3>Store Location</h3>
        <p>1234 St. Address</p>
        <p>Surrey, B.C.</p>
        <p>VVV 123</p>
      </section>
    </main>`;
  }
}
